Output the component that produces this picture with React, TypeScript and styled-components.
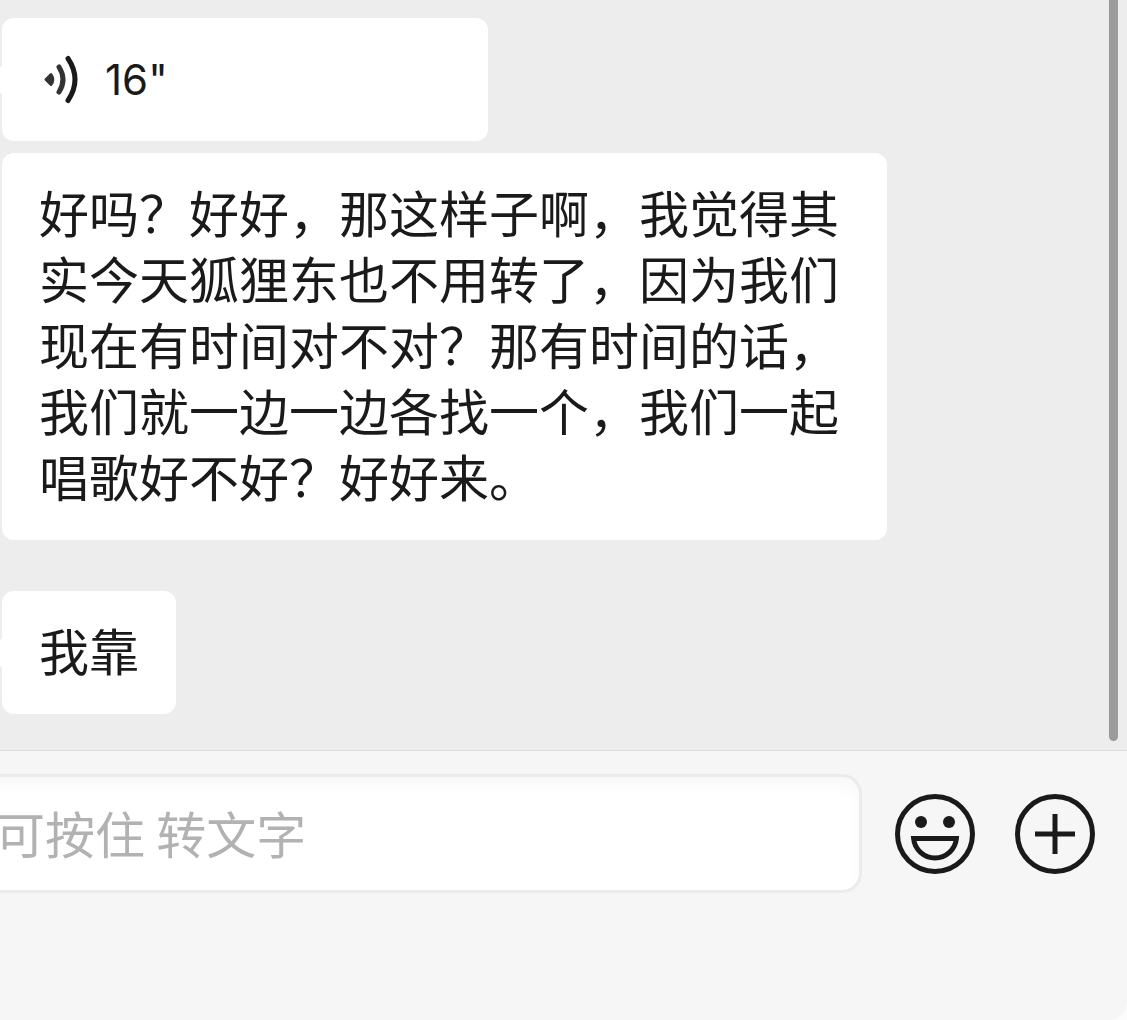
import React from "react";
import styled, { createGlobalStyle, css } from "styled-components";

const ink = "#1a1a1a";
const fontStack = `Inter, "Noto Sans CJK SC", sans-serif`;

const GlobalStyle = createGlobalStyle`
  *, *::before, *::after { box-sizing: border-box; }
  body {
    margin: 0;
    background: #fcfcfc;
    color: ${ink};
    font-family: ${fontStack};
  }
`;

const Screen = styled.div`
  display: flex;
  flex-direction: column;
  min-height: 100vh;
  overflow: hidden;
`;

const Conversation = styled.main`
  position: relative;
  padding: 18px 32px 36px 2px;
  background: #ededed;
  border-bottom: 1px solid #dcdcdc;
`;

const ScrollThumb = styled.div`
  position: absolute;
  top: 0;
  right: 9px;
  bottom: 9px;
  width: 9px;
  border-radius: 0 0 5px 5px;
  background: #9b9b9b;
`;

const MessageList = styled.ul`
  display: flex;
  flex-direction: column;
  align-items: flex-start;
  gap: 51px;
  margin: 0;
  padding: 0;
  list-style: none;
`;

const Message = styled.li`
  display: flex;
  flex-direction: column;
  align-items: flex-start;
  gap: 12px;
`;

const bubble = css<{ $tail?: boolean }>`
  position: relative;
  margin: 0;
  border: 0;
  border-radius: 12px;
  background: #fff;
  color: ${ink};
  line-height: 66px;

  ${({ $tail }) =>
    $tail &&
    css`
      &::before {
        content: "";
        position: absolute;
        top: 50%;
        left: 0;
        width: 28px;
        height: 28px;
        border-radius: 4px;
        background: #fff;
        transform: translate(-9px, -50%) rotate(45deg);
      }
    `}
`;

const TextBubble = styled.p<{ $tail?: boolean }>`
  ${bubble}
  max-width: 885px;
  padding: 25px 37px 32px;
  font-family: "Noto Sans CJK SC", sans-serif;
  font-size: 50px;
`;

const VoiceBubble = styled.button<{ $tail?: boolean }>`
  ${bubble}
  display: flex;
  align-items: center;
  gap: 24px;
  width: 486px;
  max-width: 100%;
  padding: 29px 37px 28px;
  font-family: ${fontStack};
  font-size: 42px;
  text-align: left;
`;

const VoiceIcon = styled.svg`
  position: relative;
  width: 42px;
  height: 52px;
  fill: none;
  stroke-linecap: round;
`;

const Composer = styled.form`
  display: flex;
  flex: 1;
  align-items: flex-start;
  padding: 23px 32px 24px 0;
  border-radius: 0 0 18px 0;
  background: #f6f6f6;
`;

const MessageInput = styled.input`
  flex: 1;
  min-width: 0;
  height: 119px;
  margin: 0 33px 0 -40px;
  padding: 0 32px 3px;
  border: 3px solid #ebebeb;
  border-radius: 20px;
  outline: 0;
  background: #fff;
  box-shadow: inset 0 8px 16px rgba(0, 0, 0, 0.03);
  color: ${ink};
  font-family: "Noto Sans CJK SC", sans-serif;
  font-size: 50px;

  &::placeholder {
    color: #b2b2b2;
    opacity: 1;
  }
`;

const Actions = styled.div`
  display: flex;
  gap: 40px;
  padding-top: 20px;
`;

const IconButton = styled.button`
  display: block;
  width: 80px;
  height: 80px;
  padding: 0;
  border: 0;
  background: none;
  color: ${ink};

  svg {
    display: block;
    fill: none;
    stroke: currentColor;
    stroke-width: 5;
  }
`;

const SoundWaves = () => (
  <VoiceIcon viewBox="0 0 42 52" aria-hidden="true">
    <path
      d="M7 25.5 L12 20.5 Q15.5 25.5 12 30.5 Z"
      fill="#333"
      stroke="#333"
      strokeWidth="3"
      strokeLinejoin="round"
    />
    <path d="M20 13 Q28 25.5 20 38" stroke="#333" strokeWidth="5" />
    <path d="M29 4.5 Q43 25.5 29 46.5" stroke={ink} strokeWidth="5" />
  </VoiceIcon>
);

const Smiley = () => (
  <svg viewBox="0 0 80 80" aria-hidden="true">
    <circle cx="40" cy="40" r="37.5" />
    <circle cx="26" cy="28" r="6" fill="currentColor" stroke="none" />
    <circle cx="54" cy="28" r="6" fill="currentColor" stroke="none" />
    <path d="M18.6 44.5 H61.4 A21.5 21.5 0 0 1 18.6 44.5 Z" />
  </svg>
);

const PlusCircle = () => (
  <svg viewBox="0 0 80 80" aria-hidden="true">
    <circle cx="40" cy="40" r="37.5" />
    <path d="M20 40 H60 M40 20 V60" />
  </svg>
);

const transcript =
  "好吗？好好，那这样子啊，我觉得其实今天狐狸东也不用转了，因为我们现在有时间对不对？那有时间的话，我们就一边一边各找一个，我们一起唱歌好不好？好好来。";

export default function App() {
  return (
    <Screen lang="zh-CN">
      <GlobalStyle />
      <Conversation>
        <MessageList>
          <Message>
            <VoiceBubble type="button" $tail>
              <SoundWaves />
              16"
            </VoiceBubble>
            <TextBubble>{transcript}</TextBubble>
          </Message>
          <Message>
            <TextBubble $tail>我靠</TextBubble>
          </Message>
        </MessageList>
        <ScrollThumb />
      </Conversation>
      <Composer onSubmit={(event) => event.preventDefault()}>
        <MessageInput
          type="text"
          aria-label="可按住 转文字"
          placeholder="可按住 转文字"
        />
        <Actions>
          <IconButton type="button" aria-label="表情">
            <Smiley />
          </IconButton>
          <IconButton type="button" aria-label="更多">
            <PlusCircle />
          </IconButton>
        </Actions>
      </Composer>
    </Screen>
  );
}
